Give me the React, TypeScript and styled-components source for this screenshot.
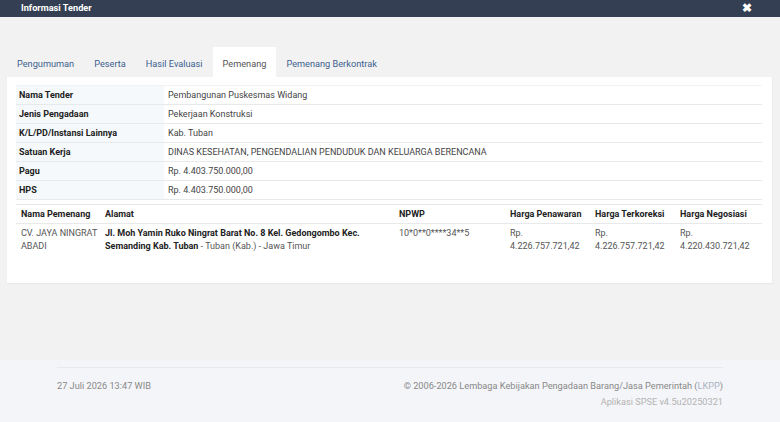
import React from "react";
import styled, { createGlobalStyle } from "styled-components";

const Global = createGlobalStyle`
  html, body { margin: 0; padding: 0; }
  body { font-family: Roboto, "Liberation Sans", sans-serif; font-size: 9px; color: #333; background: #f2f2f2; }
  * { box-sizing: border-box; }
`;

const Page = styled.div`
  width: 780px;
  height: 422px;
  display: flex;
  flex-direction: column;
  background: #f2f2f2;
  overflow: hidden;
`;

const TopBar = styled.div`
  height: 17px;
  background: #353f54;
  display: flex;
  align-items: center;
  justify-content: space-between;
  padding: 0 28px 0 21px;
  color: #fff;
`;

const Title = styled.div`
  font-weight: 700;
  font-size: 9.2px;
  line-height: 14px;
  margin-top: -2px;
`;

const Close = styled.div`
  font-size: 12px;
  font-weight: 700;
  line-height: 14px;
  margin-top: -2px;
`;

const Body = styled.div`
  flex: 1;
  padding: 30px 7px 0 7px;
  display: flex;
  flex-direction: column;
`;

const Tabs = styled.div`
  display: flex;
  height: 30px;
`;

const Tab = styled.div<{ $active?: boolean }>`
  padding: 2px 10px 0;
  display: flex;
  align-items: center;
  color: ${(p) => (p.$active ? "#555" : "#3d5f8f")};
  background: ${(p) => (p.$active ? "#fff" : "transparent")};
  font-size: 9.2px;
`;

const Card = styled.div`
  background: #fff;
  padding: 8px 10px 0 9px;
  height: 206px;
  box-shadow: 0 1px 1px rgba(0, 0, 0, 0.04);
  border-right: 1px solid #ececec;
`;

const InfoTable = styled.table`
  width: 100%;
  border-collapse: collapse;
  border-top: 1px solid #f1f3f5;
`;

const InfoRow = styled.tr`
  height: 19px;
  border-bottom: 1px solid #e8e9eb;
`;

const Label = styled.td`
  width: 148px;
  background: #f5f9fc;
  font-weight: 700;
  padding: 0 0 0 3px;
  color: #222;
`;

const Value = styled.td`
  padding: 0 0 0 4px;
  color: #444;
`;

const WinTable = styled.table`
  width: 100%;
  table-layout: fixed;
  border-collapse: collapse;
  margin-top: 4px;
  border-top: 1px solid #e8e9eb;
`;

const Col = styled.col<{ $w?: number }>`
  width: ${(p) => (p.$w ? `${p.$w}px` : "auto")};
`;

const Th = styled.th`
  text-align: left;
  font-weight: 700;
  color: #222;
  padding: 0 5px;
  height: 19px;
  white-space: nowrap;
  border-bottom: 1px solid #e8e9eb;
`;

const Td = styled.td`
  vertical-align: top;
  padding: 3px 1px 3px 5px;
  line-height: 13px;
  color: #555;
`;

const Addr = styled.span`
  font-weight: 700;
  color: #222;
`;

const Footer = styled.div`
  height: 62px;
  background: #f4f5f8;
  padding: 7px 57px 0 57px;
`;

const FooterInner = styled.div`
  border-top: 1px solid #e6e9ee;
  display: flex;
  justify-content: space-between;
  padding-top: 11px;
  color: #888;
  font-size: 9.2px;
`;

const Right = styled.div`
  text-align: right;
  line-height: 16px;
  margin-top: -1px;
`;

const Muted = styled.span`
  color: #aab3c2;
`;

const Version = styled.div`
  color: #b3b3b3;
`;

const DateText = styled.div`
  line-height: 14px;
`;

const info: [string, string][] = [
  ["Nama Tender", "Pembangunan Puskesmas Widang"],
  ["Jenis Pengadaan", "Pekerjaan Konstruksi"],
  ["K/L/PD/Instansi Lainnya", "Kab. Tuban"],
  ["Satuan Kerja", "DINAS KESEHATAN, PENGENDALIAN PENDUDUK DAN KELUARGA BERENCANA"],
  ["Pagu", "Rp. 4.403.750.000,00"],
  ["HPS", "Rp. 4.403.750.000,00"],
];

export default function App() {
  return (
    <Page>
      <Global />
      <TopBar>
        <Title>Informasi Tender</Title>
        <Close>✖</Close>
      </TopBar>
      <Body>
        <Tabs>
          <Tab>Pengumuman</Tab>
          <Tab>Peserta</Tab>
          <Tab>Hasil Evaluasi</Tab>
          <Tab $active>Pemenang</Tab>
          <Tab>Pemenang Berkontrak</Tab>
        </Tabs>
        <Card>
          <InfoTable>
            <tbody>
              {info.map(([k, v]) => (
                <InfoRow key={k}>
                  <Label>{k}</Label>
                  <Value>{v}</Value>
                </InfoRow>
              ))}
            </tbody>
          </InfoTable>
          <WinTable>
            <colgroup>
              <Col $w={84} />
              <Col $w={294} />
              <Col $w={111} />
              <Col $w={85} />
              <Col $w={85} />
              <Col />
            </colgroup>
            <thead>
              <tr>
                <Th>Nama Pemenang</Th>
                <Th>Alamat</Th>
                <Th>NPWP</Th>
                <Th>Harga Penawaran</Th>
                <Th>Harga Terkoreksi</Th>
                <Th>Harga Negosiasi</Th>
              </tr>
            </thead>
            <tbody>
              <tr>
                <Td>CV. JAYA NINGRAT ABADI</Td>
                <Td>
                  <Addr>Jl. Moh Yamin Ruko Ningrat Barat No. 8 Kel. Gedongombo Kec. Semanding Kab. Tuban</Addr> - Tuban (Kab.) - Jawa Timur
                </Td>
                <Td>10*0**0****34**5</Td>
                <Td>Rp. 4.226.757.721,42</Td>
                <Td>Rp. 4.226.757.721,42</Td>
                <Td>Rp. 4.220.430.721,42</Td>
              </tr>
            </tbody>
          </WinTable>
        </Card>
      </Body>
      <Footer>
        <FooterInner>
          <DateText>27 Juli 2026 13:47 WIB</DateText>
          <Right>
            <div>
              © 2006-2026 Lembaga Kebijakan Pengadaan Barang/Jasa Pemerintah (<Muted>LKPP</Muted>)
            </div>
            <Version>Aplikasi SPSE v4.5u20250321</Version>
          </Right>
        </FooterInner>
      </Footer>
    </Page>
  );
}
